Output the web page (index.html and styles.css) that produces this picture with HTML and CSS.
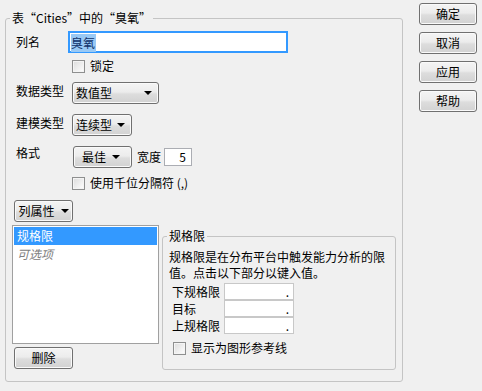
FILE: index.html
```html
<!DOCTYPE html>
<html lang="zh-CN">
<head>
    <meta charset="UTF-8">
    <title>列信息</title>
    <link rel="stylesheet" href="styles.css">
</head>
<body>

<div class="dialog">
    <fieldset class="group main-group">
        <legend>表“Cities”中的“臭氧”</legend>

        <div class="row name-row">
            <span class="lbl">列名</span>
            <div class="text-box focused"><span class="sel">臭氧</span></div>
        </div>

        <div class="row check-row">
            <span class="check"></span><span>锁定</span>
        </div>

        <div class="row type-row">
            <span class="lbl">数据类型</span>
            <div class="btn drop w-data"><span>数值型</span><span class="arrow"></span></div>
        </div>

        <div class="row model-row">
            <span class="lbl">建模类型</span>
            <div class="btn drop w-model"><span>连续型</span><span class="arrow"></span></div>
        </div>

        <div class="row format-row">
            <span class="lbl">格式</span>
            <div class="btn drop w-format"><span>最佳</span><span class="arrow"></span></div>
            <span class="width-lbl">宽度</span>
            <div class="text-box num-box">5</div>
        </div>

        <div class="row check-row sep-row">
            <span class="check"></span><span>使用千位分隔符 (,)</span>
        </div>

        <div class="row props-row">
            <div class="btn drop w-props"><span>列属性</span><span class="arrow"></span></div>
        </div>

        <div class="lower">
            <div class="prop-col">
                <ul class="prop-list">
                    <li class="active">规格限</li>
                    <li class="optional">可选项</li>
                </ul>
                <div class="btn w-delete">删除</div>
            </div>

            <fieldset class="group spec-group">
                <legend>规格限</legend>
                <p class="spec-note">规格限是在分布平台中触发能力分析的限值。点击以下部分以键入值。</p>
                <div class="limits">
                    <span>下规格限</span><div class="limit-box">.</div>
                    <span>目标</span><div class="limit-box">.</div>
                    <span>上规格限</span><div class="limit-box">.</div>
                </div>
                <div class="row check-row ref-row">
                    <span class="check"></span><span>显示为图形参考线</span>
                </div>
            </fieldset>
        </div>
    </fieldset>

    <div class="side">
        <div class="btn">确定</div>
        <div class="btn">取消</div>
        <div class="btn">应用</div>
        <div class="btn">帮助</div>
    </div>
</div>

</body>
</html>
```

FILE: styles.css
```css
/* Base */
body {
    margin: 0;
    background-color: #f0f0f0;
    font-family: "Noto Sans CJK SC", "DejaVu Sans", sans-serif;
    font-size: 12px;
    line-height: 16px;
    color: #000;
}

.dialog {
    display: flex;
    align-items: flex-start;
    padding: 0 5px;
}

/* Group boxes */
.group {
    margin: 0;
    padding: 0;
    border: 1px solid #c4c4c4;
    border-radius: 3px;
    min-width: 0;
}

.group legend {
    margin-left: 4px;
    padding: 0 2px;
}

.main-group {
    flex: none;
    width: 398px;
    box-sizing: border-box;
    margin-top: 10px;
    padding-bottom: 11px;
}

.main-group > legend {
    line-height: 16px;
}

/* Rows */
.row {
    display: flex;
    align-items: flex-start;
    padding-left: 10px;
}

.lbl {
    width: 56px;
    flex: none;
    margin-top: 1px;
}

.name-row { margin-top: 5px; }
.name-row .lbl { margin-top: 3px; }
.type-row { margin-top: 8px; }
.model-row { margin-top: 10px; }
.format-row { margin-top: 10px; align-items: center; }
.format-row .lbl { align-self: flex-start; margin-top: -1px; }
.sep-row { margin-top: 7px; }
.props-row { margin-top: 9px; padding-left: 8px; }

.check-row {
    align-items: center;
    height: 16px;
}

.name-row + .check-row {
    margin-top: 5px;
    padding-left: 66px;
}

.sep-row {
    padding-left: 66px;
}

.check {
    width: 11px;
    height: 11px;
    margin-right: 5px;
    border: 1px solid #8e8f8f;
    background: linear-gradient(135deg, #dcdcdc 0%, #f4f4f4 70%, #ffffff 100%);
    box-shadow: inset 0 0 0 1px #f4f4f4;
}

/* Text boxes */
.text-box {
    box-sizing: border-box;
    height: 22px;
    background: #fff;
    border: 1px solid #abadb3;
}

.focused {
    width: 220px;
    margin-left: -4px;
    padding: 1px;
    border: 2px solid #3399ff;
}

.sel {
    display: inline-block;
    padding: 1px 1px 1px 0;
    background: #99c9f5;
    color: #10326a;
}

.num-box {
    width: 28px;
    height: 18px;
    margin-left: 3px;
    padding-right: 5px;
    line-height: 16px;
    text-align: right;
}

.width-lbl {
    margin-left: 5px;
}

/* Buttons */
.btn {
    box-sizing: border-box;
    height: 22px;
    display: flex;
    align-items: center;
    justify-content: center;
    white-space: nowrap;
    border: 1px solid #707070;
    border-radius: 3px;
    background: linear-gradient(#f4f4f4 0%, #ececec 45%, #dddddd 55%, #d2d2d2 100%);
    box-shadow: inset 0 0 0 1px #fafafa;
}

.drop {
    justify-content: space-between;
    padding: 0 6px 0 3px;
}

.arrow {
    flex: none;
    width: 0;
    height: 0;
    border-left: 4px solid transparent;
    border-right: 4px solid transparent;
    border-top: 4px solid #000;
}

.w-data { width: 87px; }
.w-model { width: 60px; }
.w-format {
    width: 59px;
    margin-left: 1px;
    justify-content: center;
    gap: 6px;
}
.w-props {
    width: 59px;
    padding: 0;
    justify-content: center;
    gap: 6px;
}
.w-delete {
    width: 59px;
    margin: 3px 0 0 2px;
}

/* Lower part: property list and spec limits */
.lower {
    display: grid;
    grid-template-columns: 147px 234px;
    gap: 3px;
    align-items: start;
    margin-top: 3px;
    padding-left: 6px;
}

.prop-list {
    list-style: none;
    margin: 0;
    padding: 1px;
    height: 115px;
    background: #fff;
    border: 1px solid #a0a0a0;
}

.prop-list li {
    height: 18px;
    line-height: 18px;
    padding-left: 3px;
}

.prop-list .active {
    background: #3399ff;
    color: #fff;
}

.prop-list .optional {
    font-style: italic;
    color: #808080;
}

.spec-group {
    margin-top: 5px;
    padding: 0 5px 13px 0;
}

.spec-group > legend {
    line-height: 12px;
}

.spec-note {
    margin: 7px 0 0 6px;
}

.limits {
    display: grid;
    grid-template-columns: 52px 70px;
    grid-auto-rows: 17px;
    align-items: center;
    margin-top: 2px;
    padding-left: 9px;
}

.limit-box {
    box-sizing: border-box;
    height: 17px;
    padding-right: 4px;
    background: #fff;
    border: 1px solid #c8c8c8;
    text-align: right;
    line-height: 15px;
}

.ref-row {
    margin-top: 6px;
    padding-left: 10px;
}

/* Side buttons */
.side {
    display: flex;
    flex-direction: column;
    gap: 7px;
    width: 59px;
    margin: 3px 0 0 16px;
}
```
